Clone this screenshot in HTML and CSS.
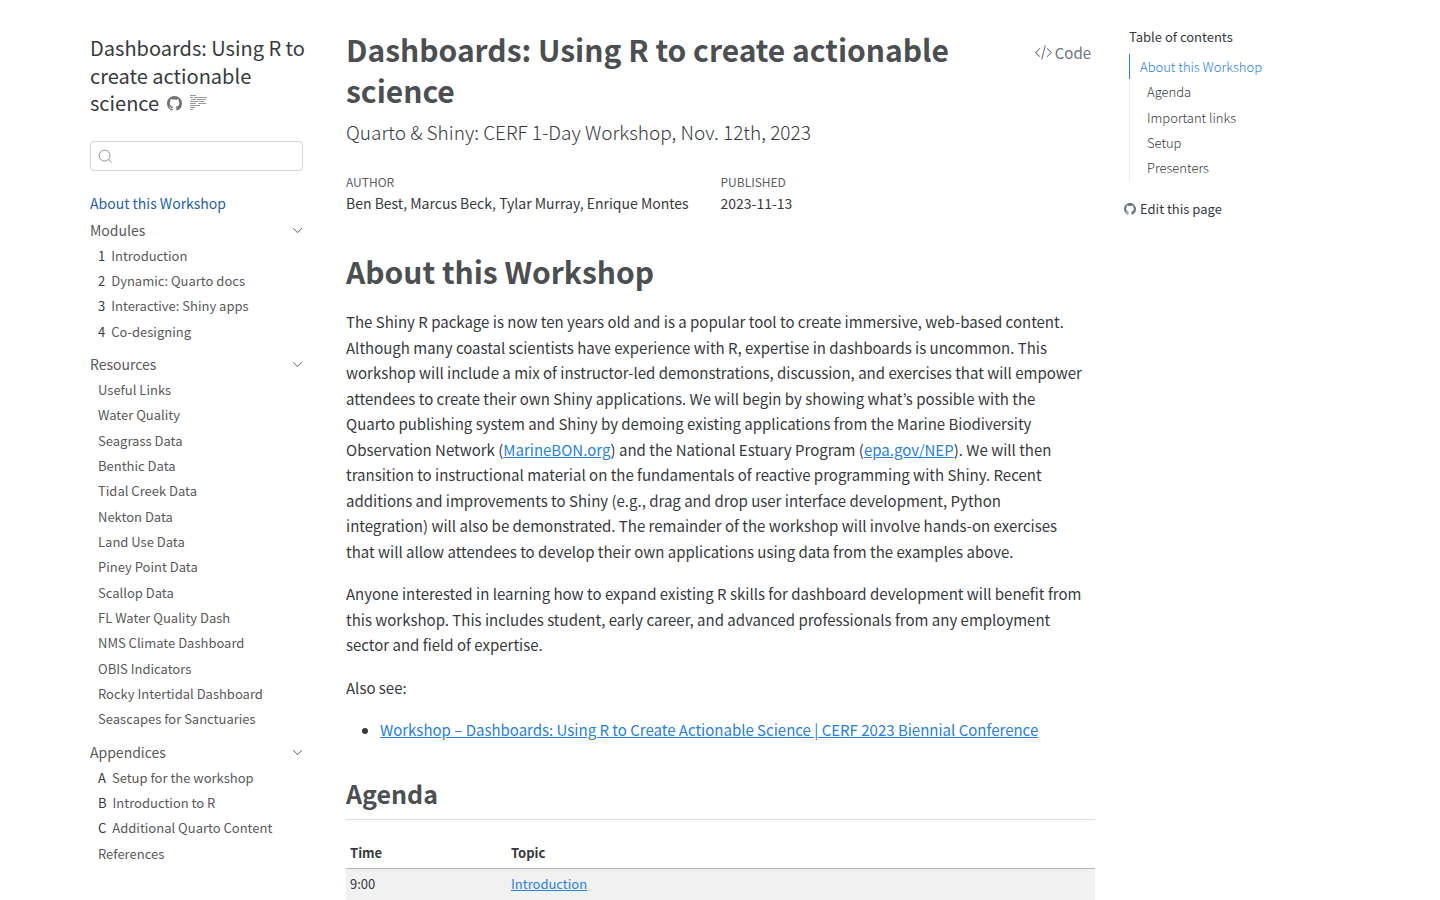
FILE: index.html
```html
<!DOCTYPE html>
<html lang="en">
<head>
<meta charset="utf-8">
<meta name="viewport" content="width=device-width, initial-scale=1">
<title>Dashboards: Using R to create actionable science</title>
<link rel="stylesheet" href="styles.css">
</head>
<body>
<svg width="0" height="0" class="sprite" aria-hidden="true">
  <symbol id="github" viewBox="0 0 16 16"><path d="M8 0C3.58 0 0 3.58 0 8c0 3.54 2.29 6.53 5.47 7.59.4.07.55-.17.55-.38 0-.19-.01-.82-.01-1.49-2.01.37-2.53-.49-2.69-.94-.09-.23-.48-.94-.82-1.13-.28-.15-.68-.52-.01-.53.63-.01 1.08.58 1.23.82.72 1.21 1.87.87 2.33.66.07-.52.28-.87.51-1.07-1.78-.2-3.64-.89-3.64-3.95 0-.87.31-1.59.82-2.15-.08-.2-.36-1.02.08-2.12 0 0 .67-.21 2.2.82.64-.18 1.32-.27 2-.27s1.36.09 2 .27c1.53-1.04 2.2-.82 2.2-.82.44 1.1.16 1.92.08 2.12.51.56.82 1.27.82 2.15 0 3.07-1.87 3.75-3.65 3.95.29.25.54.73.54 1.48 0 1.07-.01 1.93-.01 2.2 0 .21.15.46.55.38A8.01 8.01 0 0 0 16 8c0-4.42-3.58-8-8-8z"/></symbol>
  <symbol id="chevron" viewBox="0 0 16 16"><path fill-rule="evenodd" d="M1.646 4.646a.5.5 0 0 1 .708 0L8 10.293l5.646-5.647a.5.5 0 0 1 .708.708l-6 6a.5.5 0 0 1-.708 0l-6-6a.5.5 0 0 1 0-.708z"/></symbol>
</svg>
<div class="page">
  <nav class="sidebar" aria-label="Site">
    <div class="site-title">
      <a href="#">Dashboards: Using R to create actionable science</a>
      <span class="tools">
        <a href="#" aria-label="Source code"><svg class="icon-github"><use href="#github"/></svg></a>
        <a href="#" aria-label="Reader mode"><svg class="icon-reader" viewBox="0 0 17 16"><path d="M0 .5h6M0 2.5h3M4 2.5h13M1 4.5h5M7 4.5h9M0 6.5h8M9 6.5h5M0 8.5h6M8 8.5h8M0 10.5h10M0 12.5h5M0 14.5h3"/></svg></a>
      </span>
    </div>
    <form class="search" role="search">
      <svg viewBox="0 0 16 16" aria-hidden="true"><circle cx="7" cy="7" r="5.8"/><path d="M11.2 11.2 14.5 14.5"/></svg>
      <input type="search" aria-label="Search">
    </form>
    <a class="top active" href="#">About this Workshop</a>
    <section>
      <button class="top" type="button">Modules<svg><use href="#chevron"/></svg></button>
      <ul>
        <li><a href="#"><b>1</b>Introduction</a></li>
        <li><a href="#"><b>2</b>Dynamic: Quarto docs</a></li>
        <li><a href="#"><b>3</b>Interactive: Shiny apps</a></li>
        <li><a href="#"><b>4</b>Co-designing</a></li>
      </ul>
    </section>
    <section>
      <button class="top" type="button">Resources<svg><use href="#chevron"/></svg></button>
      <ul>
        <li><a href="#">Useful Links</a></li>
        <li><a href="#">Water Quality</a></li>
        <li><a href="#">Seagrass Data</a></li>
        <li><a href="#">Benthic Data</a></li>
        <li><a href="#">Tidal Creek Data</a></li>
        <li><a href="#">Nekton Data</a></li>
        <li><a href="#">Land Use Data</a></li>
        <li><a href="#">Piney Point Data</a></li>
        <li><a href="#">Scallop Data</a></li>
        <li><a href="#">FL Water Quality Dash</a></li>
        <li><a href="#">NMS Climate Dashboard</a></li>
        <li><a href="#">OBIS Indicators</a></li>
        <li><a href="#">Rocky Intertidal Dashboard</a></li>
        <li><a href="#">Seascapes for Sanctuaries</a></li>
      </ul>
    </section>
    <section>
      <button class="top" type="button">Appendices<svg><use href="#chevron"/></svg></button>
      <ul>
        <li><a href="#"><b>A</b>Setup for the workshop</a></li>
        <li><a href="#"><b>B</b>Introduction to R</a></li>
        <li><a href="#"><b>C</b>Additional Quarto Content</a></li>
        <li><a href="#">References</a></li>
      </ul>
    </section>
  </nav>

  <main class="content">
    <header>
      <div class="title-row">
        <h1>Dashboards: Using R to create actionable science</h1>
        <button class="code" type="button"><svg viewBox="0 0 16 16" aria-hidden="true"><path d="M4.6 4 .8 8l3.8 4M11.4 4l3.8 4-3.8 4M9.7 1.2 6.3 14.8"/></svg>Code</button>
      </div>
      <p class="subtitle">Quarto &amp; Shiny: CERF 1-Day Workshop, Nov. 12th, 2023</p>
      <dl class="meta">
        <div><dt>AUTHOR</dt><dd>Ben Best, Marcus Beck, Tylar Murray, Enrique Montes</dd></div>
        <div><dt>PUBLISHED</dt><dd>2023-11-13</dd></div>
      </dl>
    </header>
    <h1 class="section-title">About this Workshop</h1>
    <p>The Shiny R package is now ten years old and is a popular tool to create immersive, web-based content. Although many coastal scientists have experience with R, expertise in dashboards is uncommon. This workshop will include a mix of instructor-led demonstrations, discussion, and exercises that will empower attendees to create their own Shiny applications. We will begin by showing what’s possible with the Quarto publishing system and Shiny by demoing existing applications from the Marine Biodiversity Observation Network (<a href="#">MarineBON.org</a>) and the National Estuary Program (<a href="#">epa.gov/NEP</a>). We will then transition to instructional material on the fundamentals of reactive programming with Shiny. Recent additions and improvements to Shiny (e.g., drag and drop user interface development, Python integration) will also be demonstrated. The remainder of the workshop will involve hands-on exercises that will allow attendees to develop their own applications using data from the examples above.</p>
    <p>Anyone interested in learning how to expand existing R skills for dashboard development will benefit from this workshop. This includes student, early career, and advanced professionals from any employment sector and field of expertise.</p>
    <p>Also see:</p>
    <ul class="links"><li><a href="#">Workshop – Dashboards: Using R to Create Actionable Science | CERF 2023 Biennial Conference</a></li></ul>
    <h2>Agenda</h2>
    <table>
      <thead><tr><th scope="col">Time</th><th scope="col">Topic</th></tr></thead>
      <tbody><tr><td>9:00</td><td><a href="#">Introduction</a></td></tr></tbody>
    </table>
  </main>

  <aside class="toc">
    <h2>Table of contents</h2>
    <ul>
      <li class="current"><a href="#">About this Workshop</a></li>
      <li><a href="#">Agenda</a></li>
      <li><a href="#">Important links</a></li>
      <li><a href="#">Setup</a></li>
      <li><a href="#">Presenters</a></li>
    </ul>
    <a class="edit" href="#"><svg><use href="#github"/></svg>Edit this page</a>
  </aside>
</div>
</body>
</html>
```
FILE: styles.css
```css
* { box-sizing: border-box; }
body {
  margin: 0;
  height: 100vh;
  overflow: hidden;
  background: #fff;
  color: #373a3c;
  font: 15px/1.7 "Noto Sans CJK KR", "Open Sans", sans-serif;
}
ul { list-style: none; margin: 0; padding: 0; }
a { color: #2780e3; }
button { border: 0; padding: 0; background: none; font: inherit; color: inherit; cursor: pointer; }
svg { fill: currentColor; }
.sprite { position: absolute; }
.page {
  display: grid;
  grid-template-columns: 213px minmax(0, 749fr) minmax(0, 221fr);
  column-gap: 43px;
  padding: 0 81px 0 90px;
}

.sidebar { padding-top: 34px; font-size: 13px; color: #595959; }
.sidebar a { color: inherit; text-decoration: none; }
.site-title { margin-right: -4px; font-size: 20px; line-height: 1.375; color: #373a3c; }
.tools { display: inline-flex; gap: 8px; margin-left: 3px; color: #6f7376; }
.tools a { display: flex; align-items: flex-start; padding-bottom: 1px; }
.icon-github { width: 15px; height: 15px; margin-top: 1px; }
.icon-reader { width: 17px; height: 16px; stroke: #999; fill: none; }
.search {
  display: flex;
  align-items: center;
  height: 30px;
  margin: 24px 0 19px;
  padding: 0 7px;
  border: 1px solid #ced4da;
  border-radius: 4px;
}
.search svg { flex: none; width: 15px; height: 15px; margin-top: 2px; fill: none; stroke: #888; }
.search input { flex: 1; min-width: 0; border: 0; outline: 0; background: none; font: inherit; }
.top {
  display: flex;
  justify-content: space-between;
  align-items: center;
  width: 100%;
  font-size: 14px;
  line-height: 27px;
}
.sidebar .active { color: #1f5fa8; }
section .top { line-height: 26px; }
.top svg { width: 11px; height: 11px; margin-top: 2px; }
.sidebar section { margin-bottom: 7px; }
.sidebar li { padding-left: 8px; line-height: 1.95; }
.sidebar b { margin-right: 6px; font-weight: 400; color: #373a3c; }

.content { padding-top: 29px; }
h1, h2 { margin: 0; color: #4b4f52; font-weight: 700; }
h1 { font-size: 30px; line-height: 41px; }
.title-row { display: flex; justify-content: space-between; align-items: flex-start; }
.title-row h1 { flex: 1; padding-right: 40px; }
.code { display: flex; align-items: center; gap: 3px; margin: 11px 4px 0 0; color: #6c757d; }
.code svg { width: 17px; height: 17px; fill: none; stroke: currentColor; }
.subtitle { margin: 5px 0 0; font-size: 19px; line-height: 32px; font-weight: 300; }
.meta { display: grid; grid-template-columns: 1fr 1fr; margin: 24px 0 0; }
.meta dt { font-size: 12px; line-height: 20px; color: #5d6063; }
.meta dd { margin: 0; font-size: 14px; line-height: 22px; }
.section-title { margin: 37px 0 17px; }
p { margin: 0 0 17px; padding-right: 10px; }
.links { margin-bottom: 33px; padding-left: 34px; list-style: disc; }
.content h2 { padding-bottom: 9px; border-bottom: 1px solid #dee2e6; font-size: 25px; line-height: 34px; }
table { width: 100%; margin-top: 17px; border-collapse: collapse; font-size: 13px; }
th, td { padding: 4px; text-align: left; line-height: 23px; }
td { padding: 3px 4px 6px; }
th:first-child { width: 161px; }
thead { border-bottom: 1px solid #b2b4b6; }
tbody tr { background: #f1f1f1; }

.toc { margin-left: -9px; padding-top: 24px; font-size: 13px; }
.toc h2 { margin-bottom: 5px; font-size: 13px; font-weight: 400; line-height: 25px; color: #373a3c; }
.toc ul { border-left: 1px solid #e9ecef; font-weight: 300; }
.toc li { padding-left: 17px; line-height: 1.95; }
.toc li.current { margin-left: -1px; padding-left: 10px; border-left: 1px solid #2780e3; }
.toc a { color: inherit; text-decoration: none; }
.toc .current a { color: #2780e3; }
.edit { display: flex; align-items: center; gap: 4px; margin: 17px 0 0 -5px; }
.edit svg { width: 12px; height: 12px; color: #6c757d; }
```
